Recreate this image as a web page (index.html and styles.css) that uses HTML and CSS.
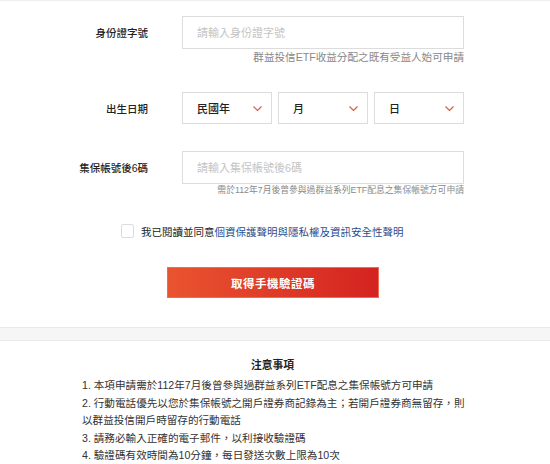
FILE: index.html
```html
<!DOCTYPE html>
<html lang="zh-Hant">
<head>
<meta charset="utf-8">
<link rel="stylesheet" href="styles.css">
</head>
<body>
<div class="page">
  <form class="form">
    <div class="row row-id">
      <label class="label">身份證字號</label>
      <div class="field">
        <input class="input" type="text" placeholder="請輸入身份證字號">
      </div>
    </div>
    <div class="hint hint-id">群益投信ETF收益分配之既有受益人始可申請</div>

    <div class="row row-date">
      <label class="label">出生日期</label>
      <div class="field selects">
        <div class="select"><span>民國年</span><svg class="chev" width="9" height="5" viewBox="0 0 9 5"><polyline points="0.5,0.5 4.5,4.5 8.5,0.5" fill="none" stroke="#e5533f" stroke-width="1.1"/></svg></div>
        <div class="select"><span>月</span><svg class="chev" width="9" height="5" viewBox="0 0 9 5"><polyline points="0.5,0.5 4.5,4.5 8.5,0.5" fill="none" stroke="#e5533f" stroke-width="1.1"/></svg></div>
        <div class="select"><span>日</span><svg class="chev" width="9" height="5" viewBox="0 0 9 5"><polyline points="0.5,0.5 4.5,4.5 8.5,0.5" fill="none" stroke="#e5533f" stroke-width="1.1"/></svg></div>
      </div>
    </div>

    <div class="row row-tdcc">
      <label class="label">集保帳號後6碼</label>
      <div class="field">
        <input class="input" type="text" placeholder="請輸入集保帳號後6碼">
      </div>
    </div>
    <div class="hint hint-tdcc">需於112年7月後曾參與過群益系列ETF配息之集保帳號方可申請</div>

    <div class="agree">
      <span class="checkbox"></span>
      <span class="agree-text">我已閱讀並同意<a class="link">個資保護聲明與隱私權及資訊安全性聲明</a></span>
    </div>

    <div class="btn-wrap">
      <button type="button" class="btn">取得手機驗證碼</button>
    </div>
  </form>

  <div class="band"></div>

  <section class="notice">
    <h3 class="notice-title">注意事項</h3>
    <ol class="notice-list">
      <li>1. 本項申請需於112年7月後曾參與過群益系列ETF配息之集保帳號方可申請</li>
      <li>2. 行動電話優先以您於集保帳號之開戶證券商記錄為主；若開戶證券商無留存，則以群益投信開戶時留存的行動電話</li>
      <li>3. 請務必輸入正確的電子郵件，以利接收驗證碼</li>
      <li>4. 驗證碼有效時間為10分鐘，每日發送次數上限為10次</li>
    </ol>
  </section>
</div>
</body>
</html>
```

FILE: styles.css
```css
* { box-sizing: border-box; }
html, body {
  margin: 0;
  padding: 0;
  background: #fff;
}
body {
  font-family: "Liberation Sans", "Noto Sans CJK TC", sans-serif;
  color: #333;
  width: 550px;
  height: 464px;
  overflow: hidden;
}
.page {
  border-top: 1px solid #eeeeee;
}
.form {
  margin: 0;
  padding-top: 15px;
}
.row {
  display: flex;
  align-items: center;
}
.label {
  width: 148px;
  text-align: right;
  font-size: 10.5px;
  font-weight: 500;
  color: #222;
  margin-right: 34px;
}
.field {
  width: 282px;
}
.input {
  display: block;
  width: 100%;
  height: 33px;
  border: 1px solid #dcdcdc;
  border-radius: 0;
  padding: 0 14px;
  font-family: inherit;
  font-size: 11px;
  color: #333;
  outline: none;
}
.input::placeholder {
  color: #c4c4c4;
}
.hint {
  width: 464px;
  text-align: right;
  color: #888;
}
.hint-id {
  font-size: 10.6px;
  line-height: 13px;
  margin-top: 2px;
}
.hint-tdcc {
  font-size: 8.8px;
  line-height: 12px;
  color: #8a8a8a;
}
.row-date {
  margin-top: 28px;
}
.selects {
  display: grid;
  grid-template-columns: 90px 90px 90px;
  column-gap: 6px;
}
.select {
  height: 32px;
  border: 1px solid #dcdcdc;
  display: flex;
  align-items: center;
  justify-content: space-between;
  padding: 0 9px 0 14px;
  font-size: 11px;
  font-weight: 500;
  color: #222;
}
.chev {
  display: block;
}
.row-tdcc {
  margin-top: 27px;
}
.agree {
  margin-top: 27px;
  height: 16px;
  display: flex;
  align-items: center;
  padding-left: 121px;
}
.checkbox {
  width: 13px;
  height: 14px;
  border: 1px solid #dcdcdc;
  border-radius: 2px;
  background: #fff;
  margin-right: 7px;
}
.agree-text {
  font-size: 10.5px;
  color: #222;
}
.link {
  color: #2b4f8e;
  text-decoration: none;
}
.btn-wrap {
  margin-top: 28px;
  padding-left: 167px;
}
.btn {
  display: block;
  width: 212px;
  height: 31px;
  border: 1px solid #ee6c55;
  background: linear-gradient(90deg, #e9542f 0%, #d42320 100%);
  color: #fff;
  font-family: inherit;
  font-size: 11.5px;
  font-weight: bold;
  letter-spacing: 0.5px;
  padding: 0;
  cursor: pointer;
}
.band {
  margin-top: 29px;
  height: 14px;
  background: #f6f6f6;
  border-top: 1px solid #e8e8e8;
  border-bottom: 1px solid #ededed;
}
.notice {
  padding: 16px 0 0 82px;
}
.notice-title {
  margin: 0;
  width: 381px;
  text-align: center;
  font-size: 10.8px;
  line-height: 17px;
  font-weight: bold;
  color: #222;
}
.notice-list {
  list-style: none;
  margin: 3px 0 0;
  padding: 0;
  width: 386px;
  font-size: 10.6px;
  line-height: 17.5px;
  color: #333;
}
```
